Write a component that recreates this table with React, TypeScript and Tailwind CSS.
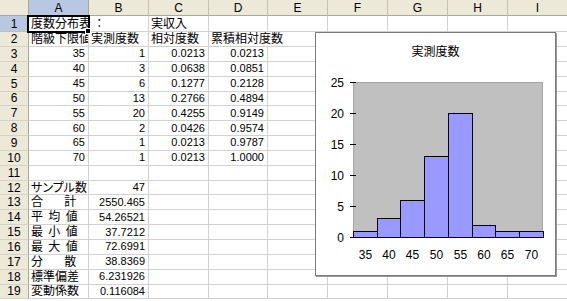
import React from 'react';

type C = { t: string; r?: boolean; ov?: boolean } | null;

const L = (t: string, ov = false): C => ({ t, ov });
const R = (t: string): C => ({ t, r: true });

const rows: C[][] = [
  [L('度数分布表 ：', true), null, L('実収入'), null],
  [L('階級下限値'), L('実測度数'), L('相対度数'), L('累積相対度数', true)],
  [R('35'), R('1'), R('0.0213'), R('0.0213')],
  [R('40'), R('3'), R('0.0638'), R('0.0851')],
  [R('45'), R('6'), R('0.1277'), R('0.2128')],
  [R('50'), R('13'), R('0.2766'), R('0.4894')],
  [R('55'), R('20'), R('0.4255'), R('0.9149')],
  [R('60'), R('2'), R('0.0426'), R('0.9574')],
  [R('65'), R('1'), R('0.0213'), R('0.9787')],
  [R('70'), R('1'), R('0.0213'), R('1.0000')],
  [],
  [L('サンプル数'), R('47')],
  [L('合    計'), R('2550.465')],
  [L('平 均 値'), R('54.26521')],
  [L('最 小 値'), R('37.7212')],
  [L('最 大 値'), R('72.6991')],
  [L('分    散'), R('38.8369')],
  [L('標準偏差'), R('6.231926')],
  [L('変動係数'), R('0.116084')],
];

const cols = ['A', 'B', 'C', 'D', 'E', 'F', 'G', 'H', 'I'];

function Cell({ c }: { c: C }) {
  if (!c) {
    return <div className="border-r border-b border-[#d2d2d2]" />;
  }
  const base = c.ov
    ? 'relative flex items-center overflow-visible border-b border-b-[#d2d2d2] z-10'
    : 'relative flex items-center overflow-hidden border-r border-b border-[#d2d2d2]';
  const align = c.r
    ? 'justify-end pr-[3px] text-[11px]'
    : 'justify-start pl-[2px] text-[12px] [font-feature-settings:"palt"]';
  return (
    <div className={`${base} ${align}`}>
      <span className="whitespace-pre leading-none text-black [word-spacing:2px]">{c.t}</span>
    </div>
  );
}

function Chart() {
  const vals = [1, 3, 6, 13, 20, 2, 1, 1];
  const labels = ['35', '40', '45', '50', '55', '60', '65', '70'];
  const edges = [37, 61, 84, 108, 132, 156, 179, 203, 227];
  const bottom = 204;
  const k = 6.2;
  const ff = "'Liberation Sans', 'Noto Sans CJK JP', sans-serif";
  return (
    <svg width="239" height="242" viewBox="0 0 239 242" fontFamily={ff}>
      <text x="119.5" y="19" fontSize="12" textAnchor="middle" dominantBaseline="central" fill="#000">
        実測度数
      </text>
      <rect x="37.5" y="49.5" width="189" height="154" fill="#c0c0c0" stroke="#a4a4a4" />
      {vals.map((v, i) => {
        const x0 = edges[i];
        const x1 = edges[i + 1];
        const h = Math.round(v * k);
        return (
          <rect
            key={i}
            x={x0 + 0.5}
            y={bottom - h + 0.5}
            width={x1 - x0}
            height={h}
            fill="#9999ff"
            stroke="#000"
            strokeWidth="1"
          />
        );
      })}
      <line x1="37" y1={bottom + 0.5} x2="228" y2={bottom + 0.5} stroke="#000" />
      {[0, 5, 10, 15, 20, 25].map((v) => {
        const y = Math.round(bottom - v * k) + 0.5;
        return (
          <g key={v}>
            <line x1="34" y1={y} x2="40" y2={y} stroke="#000" />
            <text x="28" y={y} fontSize="12" textAnchor="end" dominantBaseline="central" fill="#000">
              {v}
            </text>
          </g>
        );
      })}
      {labels.map((l, i) => (
        <text
          key={l}
          x={(edges[i] + edges[i + 1]) / 2 + 0.5}
          y="222"
          fontSize="12"
          textAnchor="middle"
          dominantBaseline="central"
          fill="#000"
        >
          {l}
        </text>
      ))}
    </svg>
  );
}

export default function App() {
  return (
    <div className="relative w-[567px] h-[301px] overflow-hidden bg-white [font-family:'Liberation_Sans','Noto_Sans_CJK_JP',sans-serif]">
      <div className="grid grid-cols-[29px_60px_60px_60px_59px_60px_60px_60px_60px_60px] grid-rows-[16px_16px_15px_repeat(17,14.85px)]">
        <div className="border-r border-b border-r-[#aca899] border-b-[#aca899] bg-[#ece9d8]" />
        {cols.map((c) => (
          <div
            key={c}
            className={
              c === 'A'
                ? 'flex items-center justify-center border-r border-b border-r-[#aca899] border-b-[#8f8c7e] bg-[#b9c8e2] text-[12px] leading-none text-black'
                : 'flex items-center justify-center border-r border-b border-r-[#c4c0b0] border-b-[#aca899] bg-[#ece9d8] text-[12px] leading-none text-black'
            }
          >
            {c}
          </div>
        ))}
        {rows.map((r, ri) => (
          <React.Fragment key={ri}>
            <div
              className={
                ri === 0
                  ? 'flex items-center justify-center border-r border-b border-r-[#8f8c7e] border-b-[#c4c0b0] bg-[#b9c8e2] text-[12px] leading-none text-black'
                  : 'flex items-center justify-center border-r border-b border-r-[#aca899] border-b-[#d6d3c6] bg-[#ece9d8] text-[12px] leading-none text-black'
              }
            >
              {ri + 1}
            </div>
            {cols.map((_, ci) => (
              <Cell key={ci} c={r[ci] ?? null} />
            ))}
          </React.Fragment>
        ))}
      </div>

      <div className="absolute left-[27px] top-[15px] z-20 h-[18px] w-[63px] border-2 border-black" />
      <div className="absolute left-[85px] top-[28px] z-30 h-[6px] w-[6px] border border-white bg-black" />

      <div className="absolute left-[315px] top-[32px] z-20 h-[244px] w-[241px] border border-[#7a7a7a] bg-white shadow-[1px_1px_0_#9a9a9a]">
        <Chart />
      </div>
    </div>
  );
}
